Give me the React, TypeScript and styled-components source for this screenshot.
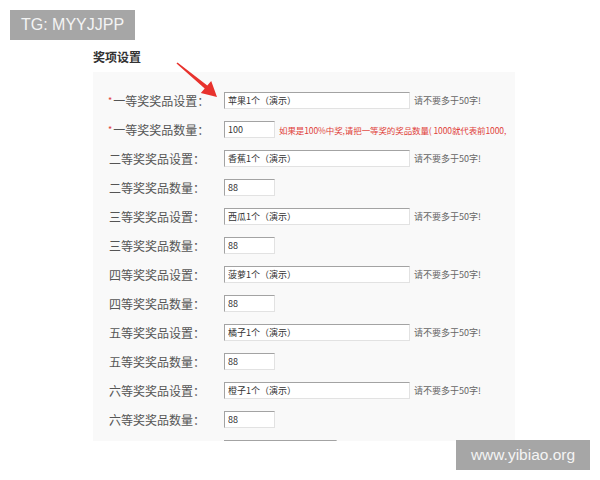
import styled, { createGlobalStyle } from "styled-components";

const GlobalStyle = createGlobalStyle`
  html, body {
    margin: 0;
    padding: 0;
    background: #ffffff;
  }
  * {
    box-sizing: border-box;
  }
`;

const Page = styled.div`
  position: relative;
  width: 600px;
  height: 480px;
  overflow: hidden;
  background: #ffffff;
  font-family: "Noto Sans CJK SC", "Liberation Sans", sans-serif;
`;

const Section = styled.section`
  padding: 49px 0 0 93px;
`;

const Title = styled.h3`
  margin: 0;
  height: 16px;
  line-height: 16px;
  font-size: 12px;
  font-weight: 700;
  color: #333333;
`;

const Panel = styled.div`
  margin-top: 7px;
  width: 422px;
  height: 369px;
  padding-top: 14px;
  background: #f9f9f9;
  overflow: hidden;
`;

const Row = styled.div`
  display: flex;
  align-items: center;
  height: 29px;
  white-space: nowrap;
`;

const Label = styled.label<{ required?: boolean }>`
  flex: 0 0 131px;
  padding-left: ${(p) => (p.required ? 15 : 16)}px;
  font-size: 12px;
  color: #555555;
`;

const Star = styled.span`
  color: #e0413a;
  font-size: 9px;
  margin-right: 1px;
  vertical-align: 2px;
`;

const Field = styled.input<{ size_: "long" | "short" | "mid" }>`
  flex: 0 0 auto;
  width: ${(p) => (p.size_ === "long" ? 186 : p.size_ === "mid" ? 113 : 51)}px;
  height: 17px;
  padding: 0 0 0 3px;
  border: 1px solid;
  border-color: #a3a3a3 #e2e2e2 #e2e2e2 #a3a3a3;
  background: #ffffff;
  font-family: "Noto Sans CJK SC", "Liberation Sans", sans-serif;
  font-size: 9px;
  color: #333333;
  outline: none;
`;

const Hint = styled.span<{ warn?: boolean }>`
  margin-left: 4px;
  font-size: ${(p) => (p.warn ? 8.5 : 9)}px;
  letter-spacing: ${(p) => (p.warn ? -0.1 : 0)}px;
  color: ${(p) => (p.warn ? "#e0413a" : "#666666")};
`;

const Badge = styled.div<{ corner: "top" | "bottom" }>`
  position: absolute;
  ${(p) =>
    p.corner === "top"
      ? "left: 10px; top: 10px; width: 125px;"
      : "left: 456px; top: 440px; width: 134px;"}
  height: 30px;
  display: flex;
  align-items: center;
  justify-content: center;
  background: #a6a6a6;
  color: #f4f4f4;
  font-family: "Liberation Sans", Arial, sans-serif;
  font-size: ${(p) => (p.corner === "top" ? 16 : 15.5)}px;
`;

const Arrow = styled.svg`
  position: absolute;
  left: 170px;
  top: 55px;
`;

type Item = {
  label: string;
  value: string;
  kind: "long" | "short";
  required?: boolean;
  note?: string;
};

const ranks = ["二", "三", "四", "五", "六"];
const fruits = ["香蕉", "西瓜", "菠萝", "橘子", "橙子"];

const items: Item[] = [
  { label: "一等奖奖品设置：", value: "苹果1个（演示）", kind: "long", required: true },
  {
    label: "一等奖奖品数量：",
    value: "100",
    kind: "short",
    required: true,
    note: "如果是100%中奖,请把一等奖的奖品数量( 1000就代表前1000,",
  },
  ...ranks.flatMap((r, i): Item[] => [
    { label: `${r}等奖奖品设置：`, value: `${fruits[i]}1个（演示）`, kind: "long" },
    { label: `${r}等奖奖品数量：`, value: "88", kind: "short" },
  ]),
];

export default function App() {
  return (
    <Page>
      <GlobalStyle />
      <Section>
        <Title>奖项设置</Title>
        <Panel>
          {items.map((it) => (
            <Row key={it.label}>
              <Label required={it.required}>
                {it.required && <Star>*</Star>}
                {it.label}
              </Label>
              <Field size_={it.kind} defaultValue={it.value} readOnly />
              {it.kind === "long" && <Hint>请不要多于50字!</Hint>}
              {it.note && <Hint warn>{it.note}</Hint>}
            </Row>
          ))}
          <Row>
            <Label />
            <Field size_="mid" defaultValue="" readOnly />
          </Row>
        </Panel>
      </Section>
      <Arrow width="55" height="50" viewBox="0 0 55 50">
        <polygon
          points="6.5,8.6 34.7,33.5 30.8,38.1 47,42 41.2,25.9 37.3,30.5 7.5,7.4"
          fill="#e8322d"
        />
      </Arrow>
      <Badge corner="top">TG: MYYJJPP</Badge>
      <Badge corner="bottom">www.yibiao.org</Badge>
    </Page>
  );
}
